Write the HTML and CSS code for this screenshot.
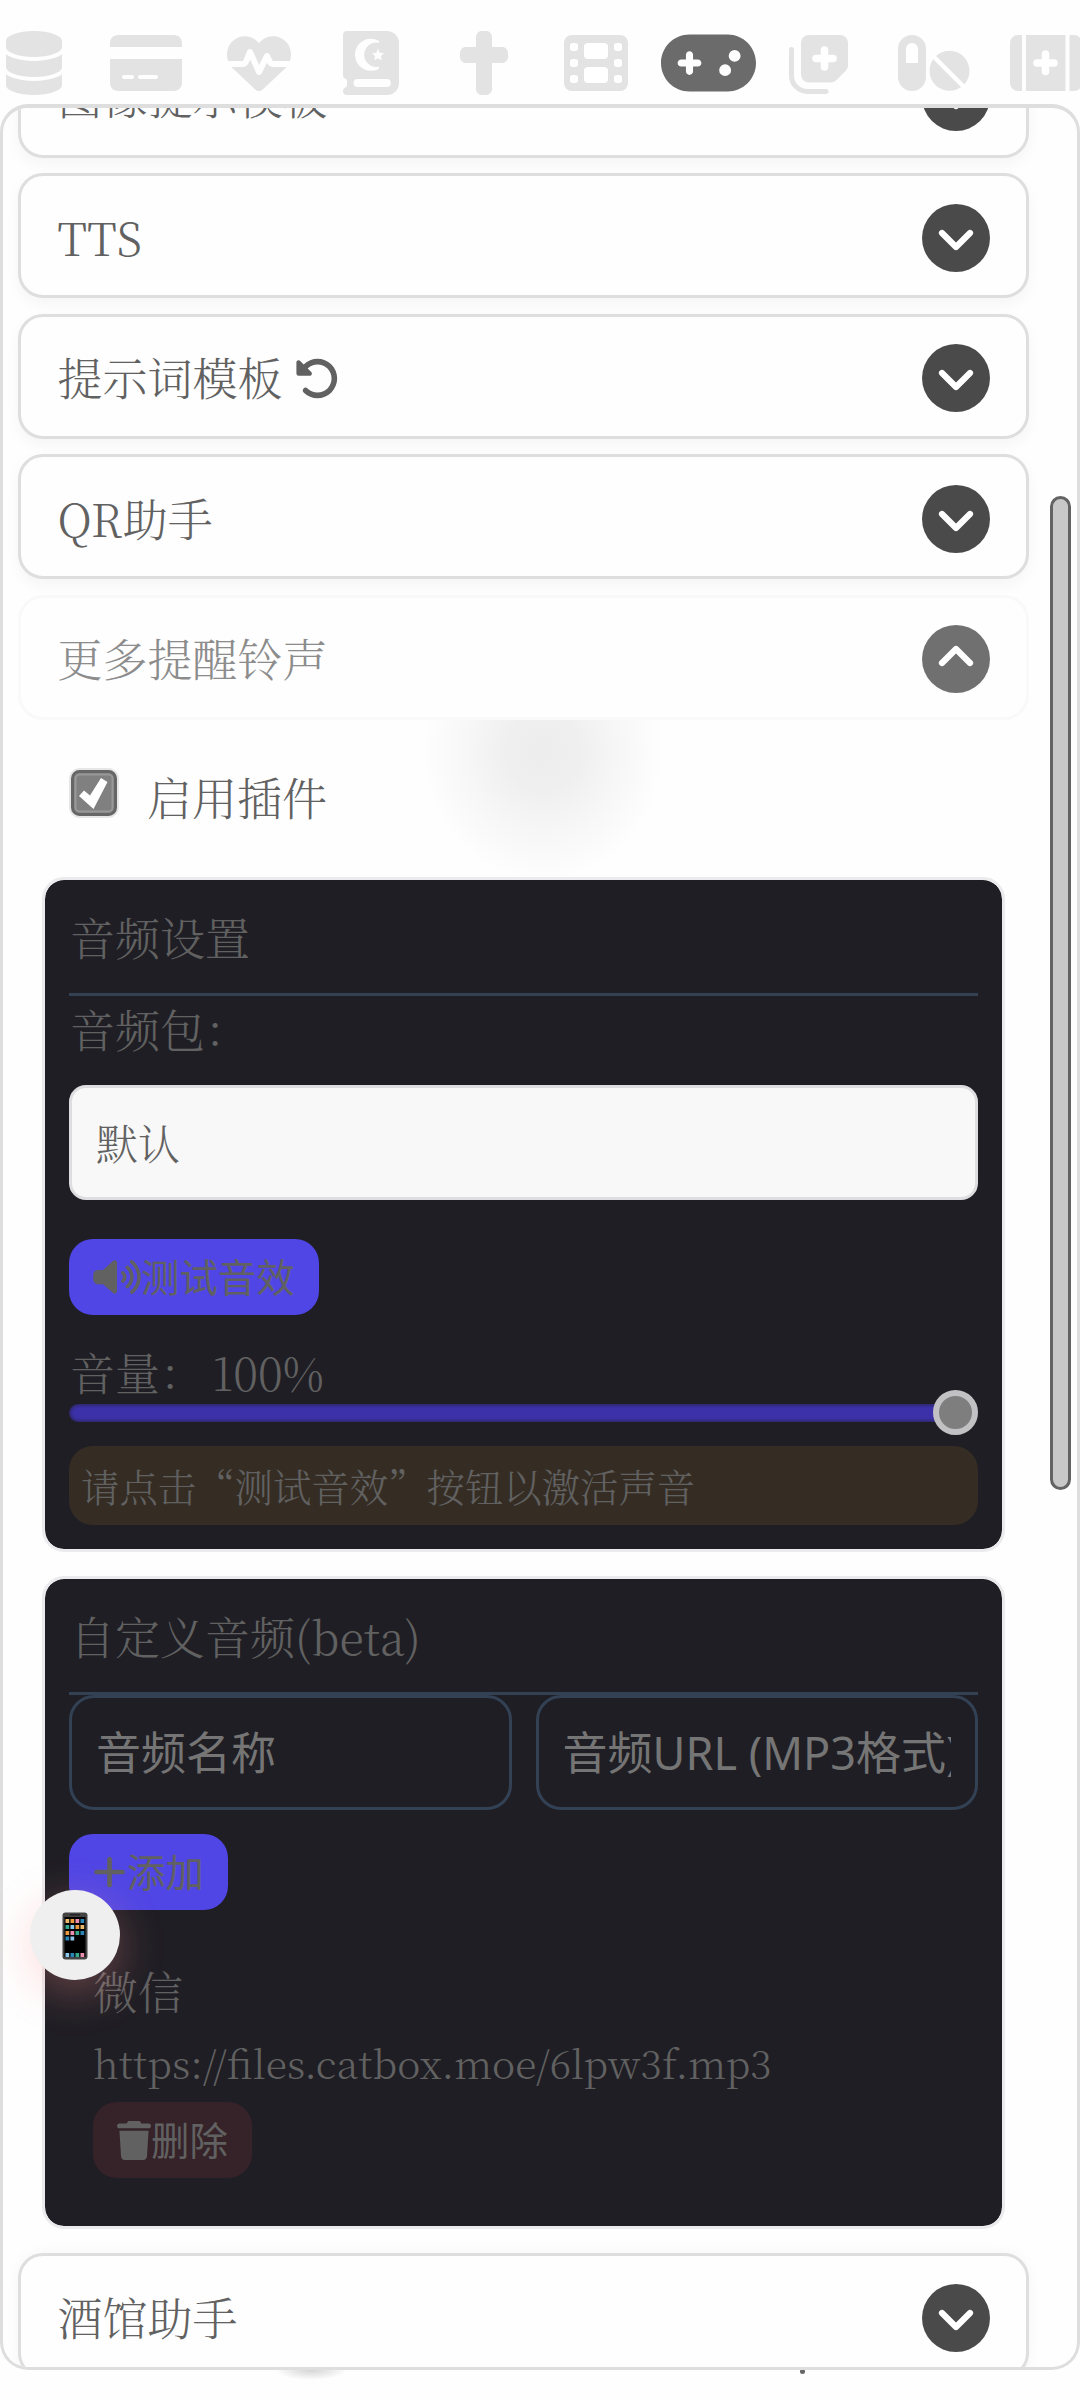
FILE: index.html
```html
<!DOCTYPE html>
<html lang="zh-CN">
<head>
<meta charset="utf-8">
<title>扩展设置</title>
<link rel="stylesheet" href="styles.css">
</head>
<body>
<svg class="defs" aria-hidden="true">
  <symbol id="down" viewBox="0 0 68 68"><circle cx="34" cy="34" r="34"/><path class="chev" d="M20 29L34 43L48 29"/></symbol>
  <symbol id="up" viewBox="0 0 68 68"><circle cx="34" cy="34" r="34"/><path class="chev" d="M20 38L34 24L48 38"/></symbol>
</svg>
<header class="topbar">
  <span class="tab"><svg width="56" height="64" viewBox="0 0 448 512"><path d="M448 80v48c0 44.2-100.3 80-224 80S0 172.2 0 128V80C0 35.8 100.3 0 224 0S448 35.8 448 80zM393.2 214.7c20.8-7.4 39.9-16.9 54.8-28.6V288c0 44.2-100.3 80-224 80S0 332.2 0 288V186.1c14.9 11.8 34 21.2 54.8 28.6C99.7 230.7 159.5 240 224 240s124.3-9.3 169.2-25.3zM0 346.1c14.9 11.8 34 21.2 54.8 28.6C99.7 390.7 159.5 400 224 400s124.3-9.3 169.2-25.3c20.8-7.4 39.9-16.9 54.8-28.6V432c0 44.2-100.3 80-224 80S0 476.2 0 432V346.1z"/></svg></span>
  <span class="tab"><svg width="72" height="64" viewBox="0 0 576 512"><path d="M64 32C28.7 32 0 60.7 0 96v32H576V96c0-35.3-28.7-64-64-64H64zM576 224H0V416c0 35.3 28.7 64 64 64H512c35.3 0 64-28.7 64-64V224zM112 352h64c8.8 0 16 7.2 16 16s-7.2 16-16 16H112c-8.8 0-16-7.2-16-16s7.2-16 16-16zm112 16c0-8.8 7.2-16 16-16H368c8.8 0 16 7.2 16 16s-7.2 16-16 16H240c-8.8 0-16-7.2-16-16z"/></svg></span>
  <span class="tab"><svg width="64" height="64" viewBox="0 0 512 512"><path d="M228.3 469.1L47.6 300.4c-4.2-3.9-8.2-8.1-11.9-12.4h87c22.6 0 43-13.6 51.7-34.5l10.5-25.2 49.3 109.5c3.8 8.5 12.1 14 21.4 14.1s17.8-5 22-13.3L320 253.7l1.7 3.4c9.5 19 28.9 31 50.1 31H476.3c-3.7 4.3-7.7 8.5-11.9 12.4L283.7 469.1c-7.5 7-17.4 10.9-27.7 10.9s-20.2-3.9-27.7-10.9zM503.7 240h-132c-3 0-5.8-1.7-7.2-4.4l-23.2-46.3c-4.1-8.1-12.4-13.3-21.5-13.3s-17.4 5.1-21.5 13.3l-41.4 82.8L205.9 158.2c-3.9-8.7-12.7-14.3-22.2-14.1s-18.1 5.9-21.8 14.8l-31.8 76.3c-1.2 3-4.2 4.9-7.4 4.9H16c-2.6 0-5 .4-7.3 1.1C3 225.2 0 208.2 0 190.9v-5.8c0-69.9 50.5-129.5 119.4-141C165 36.5 211.4 51.4 244 84l12 12 12-12c32.6-32.6 79-47.5 124.6-39.9C461.5 55.6 512 115.2 512 185.1v5.8c0 16.9-2.8 33.5-8.3 49.1z"/></svg></span>
  <span class="tab"><svg width="56" height="64" viewBox="0 0 448 512"><path fill-rule="evenodd" d="M32 0H352a96 96 0 0 1 96 96V416a96 96 0 0 1-96 96H32a32 32 0 0 1-32-32c0-12 6-22 18-28 8-4 14-10 14-20V400c0-10-6-14-14-18C6 376 0 366 0 352V32A32 32 0 0 1 32 0zM284 77A128 128 0 1 0 284 303c10-5 6-18-4-17A97 97 0 1 1 280 94c10 1 14-12 4-17zM280 142l-14 31-34 4 25 23-7 34 30-17 30 17-7-34 25-23-34-4zM116 384a32 32 0 0 0 0 64H350a32 32 0 0 0 0-64z"/></svg></span>
  <span class="tab"><svg width="48" height="64" viewBox="0 0 384 512"><path d="M176 0c-26.5 0-48 21.5-48 48v80H48c-26.5 0-48 21.5-48 48v32c0 26.5 21.5 48 48 48h80V464c0 26.5 21.5 48 48 48h32c26.5 0 48-21.5 48-48V256h80c26.5 0 48-21.5 48-48V176c0-26.5-21.5-48-48-48H256V48c0-26.5-21.5-48-48-48H176z"/></svg></span>
  <span class="tab"><svg width="64" height="64" viewBox="0 0 512 512"><rect y="32" width="512" height="448" rx="64"/><g fill="#fff"><rect x="48" y="96" width="64" height="64" rx="22"/><rect x="48" y="224" width="64" height="64" rx="22"/><rect x="48" y="352" width="64" height="64" rx="22"/><rect x="400" y="96" width="64" height="64" rx="22"/><rect x="400" y="224" width="64" height="64" rx="22"/><rect x="400" y="352" width="64" height="64" rx="22"/><rect x="160" y="96" width="192" height="128" rx="32"/><rect x="160" y="288" width="192" height="128" rx="32"/></g></svg></span>
  <span class="tab active"><svg width="95" height="76" viewBox="0 0 640 512"><path d="M192 64C86 64 0 150 0 256S86 448 192 448H448c106 0 192-86 192-192s-86-192-192-192H192zM496 168a40 40 0 1 1 0 80 40 40 0 1 1 0-80zM392 304a40 40 0 1 1 80 0 40 40 0 1 1 -80 0zM168 200c0-13.3 10.7-24 24-24s24 10.7 24 24v32h32c13.3 0 24 10.7 24 24s-10.7 24-24 24H216v32c0 13.3-10.7 24-24 24s-24-10.7-24-24V280H136c-13.3 0-24-10.7-24-24s10.7-24 24-24h32V200z"/></svg></span>
  <span class="tab copy"><svg width="60" height="64" viewBox="0 0 60 64"><path d="M2.500 18.500V44.500A16 16 0 0 0 18.500 60.500H37" fill="none" stroke="#e3e3e3" stroke-width="5" stroke-linecap="round"/><path d="M20 4H51a8 8 0 0 1 8 8V34.500c0 2-1 4-2.500 5.500L47.500 49c-1.500 1.500-3.500 2.500-5.500 2.500H20a8 8 0 0 1-8-8V12a8 8 0 0 1 8-8z"/><path class="cut" d="M35.500 19V36M27 27.500H44"/></svg></span>
  <span class="tab"><svg width="72" height="64" viewBox="0 0 72 64"><rect y="4" width="28" height="56" rx="14"/><path fill="#fff" d="M8 32V18a6 6 0 0 1 12 0V32z"/><circle cx="51.500" cy="39.800" r="20"/><path d="M33 23L70 60" stroke="#fff" stroke-width="4.500"/></svg></span>
  <span class="tab"><svg width="72" height="64" viewBox="0 0 72 64"><path d="M8 4H12V60H8A8 8 0 0 1 0 52V12A8 8 0 0 1 8 4zM16 4H55.500V60H16zM59.500 4H64A8 8 0 0 1 72 12V52A8 8 0 0 1 64 60H59.500z"/><path class="cut" d="M35.500 23V40.500M27 32H44"/></svg></span>
</header>

<main class="drawer">
  <div class="list">
    <section class="card"><span class="name-text">图像提示模板</span><svg class="toggle"><use href="#down"/></svg></section>
    <section class="card"><span class="name-text">TTS</span><svg class="toggle"><use href="#down"/></svg></section>
    <section class="card"><span class="name-text">提示词模板</span><svg class="undo" viewBox="0 0 512 512"><path d="M48.500 224H40c-13.300 0-24-10.700-24-24V72c0-9.700 5.800-18.500 14.800-22.200s19.300-1.700 26.200 5.200L98.600 96.600c87.600-86.500 228.700-86.200 315.800 1c87.500 87.500 87.500 229.300 0 316.800s-229.300 87.500-316.800 0c-12.500-12.500-12.500-32.800 0-45.300s32.800-12.500 45.300 0c62.500 62.500 163.800 62.500 226.300 0s62.500-163.800 0-226.300c-62.200-62.200-162.700-62.500-225.300-1L185 183c6.900 6.900 8.900 17.200 5.200 26.200s-12.500 14.800-22.200 14.800H48.500z"/></svg><svg class="toggle"><use href="#down"/></svg></section>
    <section class="card"><span class="name-text">QR助手</span><svg class="toggle"><use href="#down"/></svg></section>
    <section class="card open"><span class="name-text">更多提醒铃声</span><svg class="toggle"><use href="#up"/></svg></section>
  </div>

  <label class="enable">
    <svg class="check" viewBox="0 0 52 52"><rect x="1" y="1" width="50" height="50" rx="11" fill="#e6e6e6"/><rect x="4.500" y="4.500" width="43" height="43" rx="7" fill="#808080" stroke="#666" stroke-width="3"/><rect x="7.500" y="7.500" width="37" height="37" rx="4" fill="none" stroke="#989898" stroke-width="2"/><path fill="#fff" d="M11 29L16 23.500 22 28.500 33 11 39.500 15 25.500 42z"/></svg>
    <span>启用插件</span>
  </label>

  <section class="panel">
    <h2 class="panel-title">音频设置</h2>
    <div class="field-label">音频包：</div>
    <div class="select">默认</div>
    <div class="btn test"><svg width="48" height="38" viewBox="0 0 640 512"><path d="M533.600 32.500C598.500 85.300 640 165.800 640 256s-41.500 170.800-106.400 223.500c-10.300 8.400-25.400 6.800-33.800-3.500s-6.800-25.400 3.500-33.800C557.500 398.200 592 331.200 592 256s-34.500-142.200-88.700-186.300c-10.300-8.400-11.800-23.500-3.500-33.800s23.500-11.800 33.800-3.500zM473.100 107c43.200 35.200 70.900 88.900 70.900 149s-27.700 113.800-70.900 149c-10.300 8.400-25.400 6.800-33.800-3.500s-6.800-25.400 3.500-33.800C475.300 341.300 496 301.100 496 256s-20.700-85.300-53.200-111.800c-10.300-8.400-11.800-23.500-3.500-33.800s23.500-11.800 33.800-3.500zm-60.500 74.500C434.100 199.100 448 225.900 448 256s-13.900 56.900-35.400 74.500c-10.300 8.400-25.400 6.800-33.800-3.500s-6.800-25.400 3.500-33.800C393.100 284.400 400 271 400 256s-6.900-28.400-17.700-37.300c-10.300-8.400-11.800-23.500-3.500-33.800s23.500-11.800 33.800-3.500zM301.100 34.800C312.600 40 320 51.400 320 64V448c0 12.600-7.400 24-18.900 29.200s-25 3.100-34.400-5.300L131.800 352H64c-35.300 0-64-28.700-64-64V224c0-35.300 28.700-64 64-64h67.800L266.700 40.100c9.400-8.400 22.900-10.500 34.400-5.300z"/></svg><span>测试音效</span></div>
    <div class="volume"><span>音量：</span><span class="value">100%</span></div>
    <div class="slider"><div class="track"></div><div class="knob"></div></div>
    <div class="hint">请点击“测试音效”按钮以激活声音</div>
  </section>

  <section class="panel custom">
    <h2 class="panel-title">自定义音频(beta)</h2>
    <div class="inputs"><div class="input"><span>音频名称</span></div><div class="input"><span>音频URL (MP3格式)</span></div></div>
    <div class="btn add"><svg width="33" height="38" viewBox="0 0 448 512"><path d="M256 80c0-17.700-14.300-32-32-32s-32 14.300-32 32V224H48c-17.700 0-32 14.300-32 32s14.300 32 32 32H192V432c0 17.700 14.300 32 32 32s32-14.300 32-32V288H400c17.700 0 32-14.300 32-32s-14.300-32-32-32H256V80z"/></svg><span>添加</span></div>
    <div class="entry">
      <div class="name">微信</div>
      <div class="url">https://files.catbox.moe/6lpw3f.mp3</div>
      <div class="btn del"><svg width="34" height="39" viewBox="0 0 448 512"><path d="M135.200 17.700L128 32H32C14.300 32 0 46.300 0 64S14.300 96 32 96H416c17.700 0 32-14.300 32-32s-14.300-32-32-32H320l-7.200-14.300C307.400 6.800 296.300 0 284.200 0H163.800c-12.100 0-23.200 6.800-28.600 17.700zM416 128H32L53.200 467c1.600 25.300 22.600 45 47.900 45H346.900c25.300 0 46.300-19.700 47.900-45L416 128z"/></svg><span>删除</span></div>
    </div>
  </section>

  <section class="card last"><span class="name-text">酒馆助手</span><svg class="toggle"><use href="#down"/></svg></section>
  <div class="scrollbar"></div>
</main>
<footer class="under"><span class="smudge"></span><span class="speck"></span></footer>

<div class="float-btn"><svg width="26" height="48" viewBox="0 0 26 48"><rect x=".5" y=".5" width="25" height="47" rx="3" fill="#444"/><rect x="2.500" y="5" width="21" height="40" fill="#000"/><rect x="8" y="2" width="10" height="1.500" fill="#222"/>
<g fill="#e8b96a"><rect x="3.500" y="7" width="3.700" height="4"/><rect x="18.500" y="13" width="3.700" height="4"/></g>
<g fill="#e89a3c"><rect x="8.500" y="7" width="3.700" height="4"/><rect x="13.500" y="13" width="3.700" height="4"/><rect x="3.500" y="19" width="3.700" height="4"/></g>
<g fill="#ec8fb0"><rect x="13.500" y="7" width="3.700" height="4"/><rect x="8.500" y="19" width="3.700" height="4"/><rect x="18.500" y="41" width="3.700" height="4"/></g>
<g fill="#2b86b8"><rect x="18.500" y="7" width="3.700" height="4"/><rect x="18.500" y="19" width="3.700" height="4"/><rect x="3.500" y="24.500" width="3.700" height="4"/><rect x="8.500" y="41" width="3.700" height="4"/></g>
<g fill="#34a98c"><rect x="3.500" y="13" width="3.700" height="4"/><rect x="13.500" y="19" width="3.700" height="4"/><rect x="13.500" y="41" width="3.700" height="4"/></g>
<g fill="#8cc8ec"><rect x="8.500" y="13" width="3.700" height="4"/><rect x="8.500" y="24.500" width="3.700" height="4"/><rect x="3.500" y="41" width="3.700" height="4"/></g></svg></div>
</body>
</html>
```
FILE: styles.css
```css
* { box-sizing: border-box; }
html, body { margin: 0; }
body {
  position: relative;
  width: 1080px;
  height: 2400px;
  overflow: hidden;
  background: #fefefe;
  color: #616161;
  fill: #616161;
  font: 300 45px/56px "Noto Serif CJK SC", "Noto Serif SC", "Liberation Serif", "Noto Sans CJK SC", serif;
  white-space: nowrap;
}
svg { display: block; flex: none; }
.defs { position: absolute; width: 0; height: 0; }

/* top icon bar */
.topbar {
  display: flex;
  height: 104px;
  margin-left: -22.5px;
  width: 1130px;
  padding-top: 21px;
}
.tab {
  flex: 0 0 112.5px;
  height: 84px;
  display: flex;
  align-items: center;
  justify-content: center;
  fill: #e3e3e3;
}
.tab.active { fill: #6b6b6b; }
.tab.copy { padding-right: 4px; }
.cut { stroke: #fff; stroke-width: 7.5; stroke-linecap: round; }

/* drawer */
.drawer {
  position: relative;
  height: 2266px;
  border: 3px solid #dedede;
  border-top-width: 4px;
  border-radius: 28px;
  background: #fefefe;
  overflow: hidden;
  padding: 0 48px 0 15px;
}
.list {
  display: flex;
  flex-direction: column;
  gap: 15.5px;
  margin-top: -75.5px;
}
.card {
  display: flex;
  align-items: center;
  flex: none;
  height: 125px;
  border: 3px solid #dedede;
  border-radius: 25px;
  padding: 4px 36px 0 36.5px;
  background: #fefefe;
  box-shadow: 0 6px 15px rgba(0, 0, 0, .04);
}
.name-text { padding-bottom: 2px; }
.card.open { border-color: #f9f9f9; color: #8c8c8c; box-shadow: none; }
.toggle { width: 68px; height: 68px; margin-left: auto; fill: #4a4a4a; }
.open .toggle { fill: #707070; }
.chev { fill: none; stroke: #fff; stroke-width: 6.2; stroke-linecap: round; stroke-linejoin: round; }
.undo { width: 45px; height: 45px; margin-left: 12px; }

.enable {
  display: flex;
  align-items: center;
  gap: 27px;
  height: 157.5px;
  padding: 0 0 2px 50px;
  background: radial-gradient(ellipse 120px 130px at 525px 32px, #ededed 0%, #efefef 30%, #f6f6f6 60%, #fefefe 100%);
}
.check { width: 52px; height: 52px; margin-top: -9px; }

/* dark panels */
.panel {
  display: flex;
  flex-direction: column;
  align-items: flex-start;
  height: 675px;
  margin: 0 24px 24px 24px;
  padding: 0 24px;
  background: #1f1e24;
  background-clip: padding-box;
  border: 3px solid #ebebed;
  border-radius: 22px;
}
.panel.custom { height: 653px; }
.panel-title {
  align-self: stretch;
  height: 116px;
  margin: 0;
  padding: 29px 0 0 1px;
  font-size: 45px;
  font-weight: 300;
  border-bottom: 3px solid #334155;
}
.field-label { height: 89px; padding: 5px 0 0 1px; }
.select {
  align-self: stretch;
  height: 115px;
  padding: 0 24px;
  border: 3px solid #dedde0;
  border-radius: 17px;
  background: #f8f8f8;
  font-size: 42px;
  line-height: 108px;
}
.btn {
  display: flex;
  align-items: center;
  flex: none;
  height: 76px;
  border-radius: 24px;
  padding: 0 24px;
  background: #5046e5;
  font: 400 38.4px/76px "Noto Sans CJK SC", sans-serif;
}
.btn span { position: relative; top: -2px; }
.test { width: 250px; margin-top: 39px; }
.volume { display: flex; height: 75px; padding: 29px 0 0 1px; line-height: 56px; }
.value { margin-left: 7px; }
.slider {
  position: relative;
  align-self: stretch;
  display: flex;
  align-items: center;
  height: 45px;
}
.track {
  flex: 1;
  height: 18px;
  border-radius: 9px;
  background: #3c31a8;
  box-shadow: inset 0 0 4px #1f1e24;
}
.knob {
  position: absolute;
  right: 0;
  width: 45px;
  height: 45px;
  border: 6px solid #c1c1c3;
  border-radius: 50%;
  background: #7e7e7e;
}
.hint {
  align-self: stretch;
  height: 79px;
  margin-top: 11px;
  padding-left: 12px;
  border-radius: 24px;
  background: #352d24;
  font: 300 38.4px/79px "Noto Serif CJK SC", "Noto Sans CJK SC", sans-serif;
}

.inputs { align-self: stretch; display: flex; gap: 24px; }
.input {
  flex: 1 1 0;
  min-width: 0;
  height: 115px;
  padding: 0 24px;
  border: 3px solid #334155;
  border-radius: 25px;
  color: #757575;
  font: 400 45px/109px "Noto Sans", "Noto Sans CJK SC", sans-serif;
}
.input span { display: block; overflow: hidden; }
.add { width: 159px; margin-top: 24px; }
.add svg { margin-right: 1px; }
.entry { padding: 53px 0 0 24px; }
.name { height: 71px; }
.url { height: 68px; font-size: 39.2px; }
.del { width: 159px; background: #352329; }

.card.last { box-shadow: 0 0 15px rgba(0, 0, 0, .04); }

.scrollbar {
  position: absolute;
  right: 6px;
  top: 388px;
  width: 21px;
  height: 994px;
  border: 3px solid #636363;
  border-radius: 11px;
  background: #c8c8c8;
}
.under { position: relative; height: 30px; }
.smudge {
  position: absolute;
  left: 275px;
  top: 0;
  width: 72px;
  height: 12px;
  background: radial-gradient(ellipse 36px 10px at 50% 0, #d4d4d4, rgba(254, 254, 254, 0));
}
.speck {
  position: absolute;
  left: 800px;
  top: 0;
  width: 5px;
  height: 4px;
  border-radius: 1px 1px 3px 3px;
  background: #666;
}

.float-btn {
  position: absolute;
  left: 30px;
  top: 1890px;
  width: 90px;
  height: 90px;
  display: flex;
  align-items: center;
  justify-content: center;
  padding: 2px 1px 0 0;
  border-radius: 50%;
  background: #efefef;
  box-shadow: 0 12px 45px rgba(255, 150, 150, .33);
}
```
